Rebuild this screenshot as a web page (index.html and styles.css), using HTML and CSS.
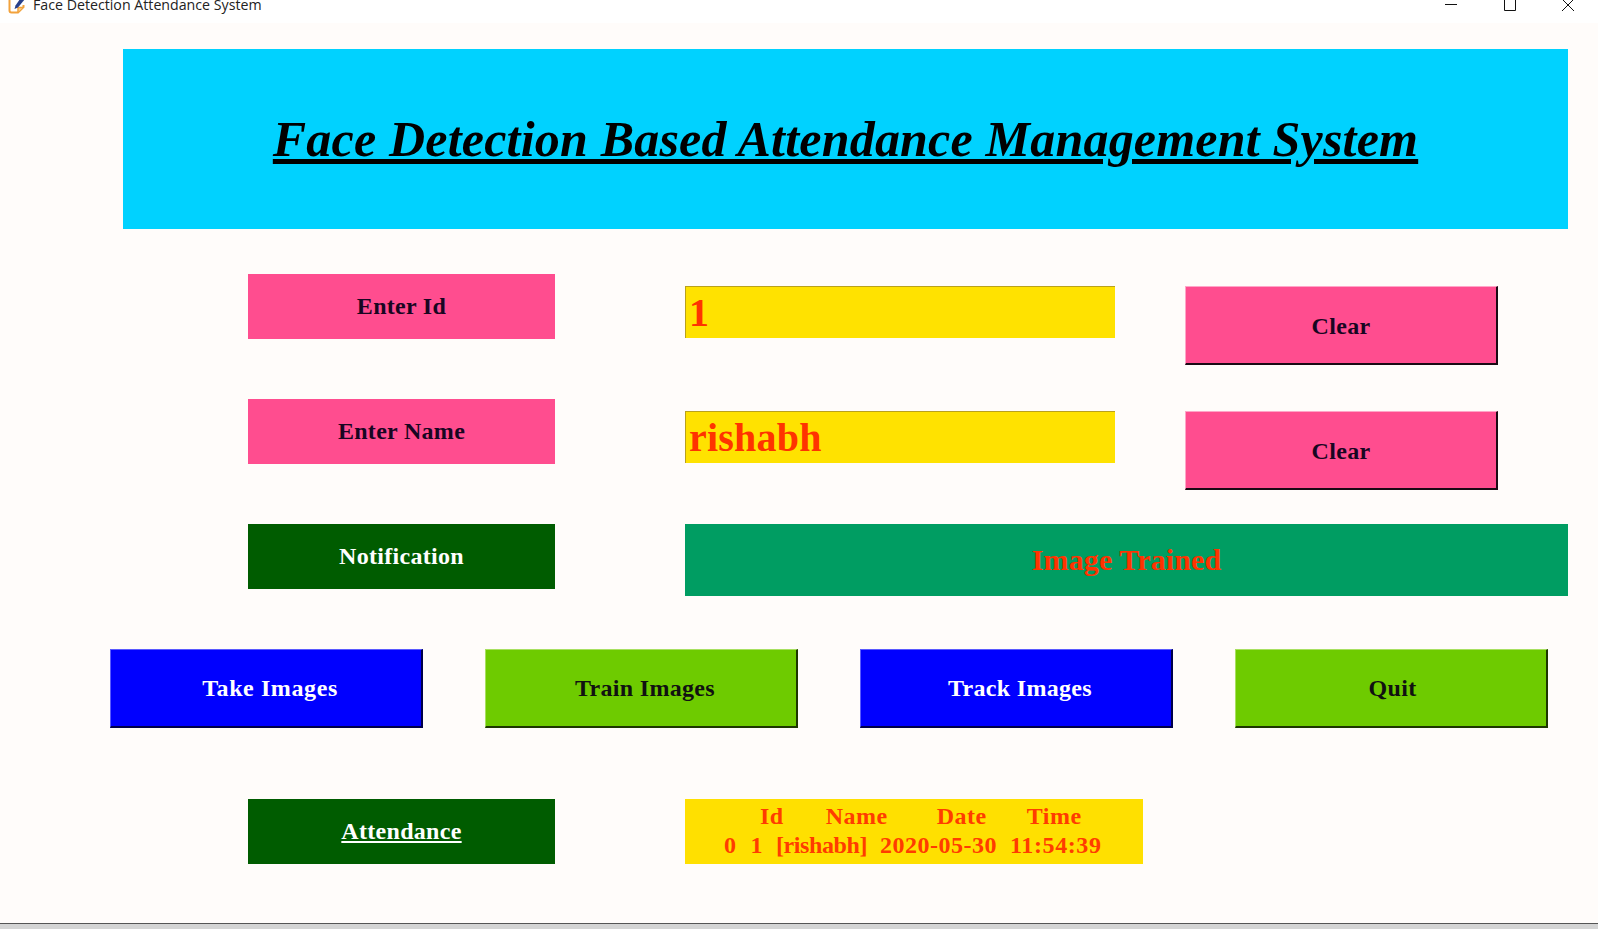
FILE: index.html
```html
<!DOCTYPE html>
<html lang="en">
<head>
    <meta charset="UTF-8">
    <meta name="viewport" content="width=device-width, initial-scale=1.0">
    <title>Face Detection Attendance System</title>
    <link rel="stylesheet" href="styles.css">
</head>
<body>
    <div class="titlebar">
        <div class="app-name">
            <svg class="app-icon" width="18" height="14" viewBox="0 0 18 14">
                <path d="M1.5 0v10.5a2 2 0 0 0 2 2h6.5l5.5-5.5V5" fill="#fff" stroke="#f2a23c" stroke-width="2"/>
                <path d="M10 12v-4.500h5" fill="#fbd08c" stroke="#f2a23c" stroke-width="1.500"/>
                <path d="M6.500 9l1-3.500L12 -1h5L10 7.500z" fill="#27408b"/>
            </svg>
            <span class="app-title">Face Detection Attendance System</span>
        </div>
        <div class="window-controls">
            <svg width="12" height="12" viewBox="0 0 12 12"><path d="M0 4.500h12" stroke="#111" fill="none"/></svg>
            <svg width="12" height="12" viewBox="0 0 12 12"><path d="M.5 -3h11v13.500H.5z" stroke="#111" fill="none"/></svg>
            <svg width="12" height="12" viewBox="0 0 12 12"><path d="M0 -1l12 12M12 -1L0 11" stroke="#111" fill="none"/></svg>
        </div>
    </div>

    <div class="window">
        <div class="banner">
            <h1>Face Detection Based Attendance Management System</h1>
        </div>

        <div class="form-row first">
            <div class="label pink">Enter Id</div>
            <input class="entry" type="text" value="1">
            <button class="btn pink clear">Clear</button>
        </div>
        <div class="form-row">
            <div class="label pink">Enter Name</div>
            <input class="entry" type="text" value="rishabh">
            <button class="btn pink clear">Clear</button>
        </div>
        <div class="form-row">
            <div class="label dark-green">Notification</div>
            <div class="message">Image Trained</div>
        </div>

        <div class="actions">
            <button class="btn blue shifted take">Take Images</button>
            <button class="btn lime shifted">Train Images</button>
            <button class="btn blue shifted">Track Images</button>
            <button class="btn lime quit">Quit</button>
        </div>

        <div class="form-row attendance">
            <div class="label dark-green"><u>Attendance</u></div>
            <div class="sheet">
                <div class="sheet-head">
                    <span>Id</span><span class="col-name">Name</span><span class="col-date">Date</span><span class="col-time">Time</span>
                </div>
                <div class="sheet-line">
                    <span class="cell-index">0</span><span>1</span><span class="cell-name">[rishabh]</span><span>2020-05-30</span><span class="cell-time">11:54:39</span>
                </div>
            </div>
        </div>
    </div>
</body>
</html>
```

FILE: styles.css
```css
* {
    box-sizing: border-box;
}
html, body {
    margin: 0;
    height: 929px;
    overflow: hidden;
}
body {
    width: 1598px;
    background: #fffcfa;
    font-family: "Liberation Serif", "Times New Roman", serif;
    display: flex;
    flex-direction: column;
}

/* window title bar, cut off at the top of the capture */
.titlebar {
    height: 23px;
    background: #fff;
    display: flex;
    justify-content: space-between;
    flex-shrink: 0;
}
.app-name {
    display: flex;
    align-items: flex-start;
    padding-left: 8px;
}
.app-title {
    font-family: "Open Sans", sans-serif;
    font-size: 14.2px;
    line-height: 14px;
    margin-top: -2px;
    margin-left: 7px;
    color: #222;
}
.window-controls {
    display: flex;
    gap: 46.5px;
    padding-right: 24px;
}

.window {
    flex: 1;
    padding-top: 26px;
    border-bottom: 5px solid #d4d4d4;
    box-shadow: inset 0 -1px 0 #555;
}
.banner {
    margin-left: 123px;
    width: 1445px;
    height: 180px;
    background: #00d2ff;
    display: flex;
    align-items: center;
    justify-content: center;
}
.banner h1 {
    margin: 0;
    font-size: 50px;
    font-weight: bold;
    font-style: italic;
    letter-spacing: 0.2px;
    text-decoration: underline;
    color: #000;
}

.form-row {
    display: flex;
    align-items: flex-start;
    padding-left: 248px;
    margin-top: 34px;
}
.form-row.first {
    margin-top: 45px;
}
.form-row.attendance {
    margin-top: 71px;
}

.label {
    width: 307px;
    height: 65px;
    display: flex;
    align-items: center;
    justify-content: center;
    font-size: 24px;
    font-weight: bold;
    letter-spacing: 0.3px;
}
.pink {
    background: #ff4d8f;
    color: #180622;
}
.dark-green {
    background: #005c00;
    color: #fff;
}

.entry {
    width: 430px;
    height: 52px;
    margin: 12px 0 0 130px;
    padding: 0 0 0 3px;
    background: #ffe200;
    border: none;
    border-top: 1px solid #b9a11c;
    border-left: 1px solid #b9a11c;
    border-radius: 0;
    font-family: inherit;
    font-size: 40px;
    font-weight: bold;
    letter-spacing: 0.2px;
    color: #ff3300;
}

.btn {
    width: 313px;
    height: 79px;
    padding: 0;
    font-family: inherit;
    font-size: 24px;
    font-weight: bold;
    letter-spacing: 0.3px;
    border-style: solid;
    border-width: 1px 2px 2px 1px;
    cursor: pointer;
}
.shifted {
    padding-left: 8px;
}
.take {
    letter-spacing: 0.6px;
}
.quit {
    padding-left: 3px;
}
.clear {
    margin: 12px 0 0 70px;
    padding-top: 2px;
    border-color: #ffa6c8 #1a0a14 #1a0a14 #ffa6c8;
}
.blue {
    background: #0000ff;
    color: #fff;
    border-color: #5a5aff #00004a #00004a #5a5aff;
}
.lime {
    background: #6ecb00;
    color: #111;
    border-color: #a8e060 #1d3600 #1d3600 #a8e060;
}

.message {
    width: 883px;
    height: 72px;
    margin-left: 130px;
    background: #009d62;
    color: #ff3300;
    font-size: 30px;
    font-weight: bold;
    letter-spacing: 0.1px;
    display: flex;
    align-items: center;
    justify-content: center;
}

.actions {
    display: flex;
    gap: 62px;
    padding-left: 110px;
    margin-top: 53px;
}

.sheet {
    width: 458px;
    height: 65px;
    margin-left: 130px;
    background: #ffe000;
    color: #ff3c00;
    font-size: 24px;
    font-weight: bold;
    letter-spacing: 0.5px;
    line-height: 28.5px;
    padding-top: 3px;
}
.sheet-head, .sheet-line {
    display: flex;
    white-space: nowrap;
}
.sheet-head {
    padding-left: 75px;
}
.col-name {
    margin-left: 42px;
}
.col-date {
    margin-left: 49px;
}
.col-time {
    margin-left: 40px;
}
.sheet-line {
    padding-left: 39px;
    gap: 13px;
}
.cell-index {
    margin-right: 1px;
}
.cell-name {
    letter-spacing: -0.4px;
}
.cell-time {
    letter-spacing: 0.6px;
}
```
